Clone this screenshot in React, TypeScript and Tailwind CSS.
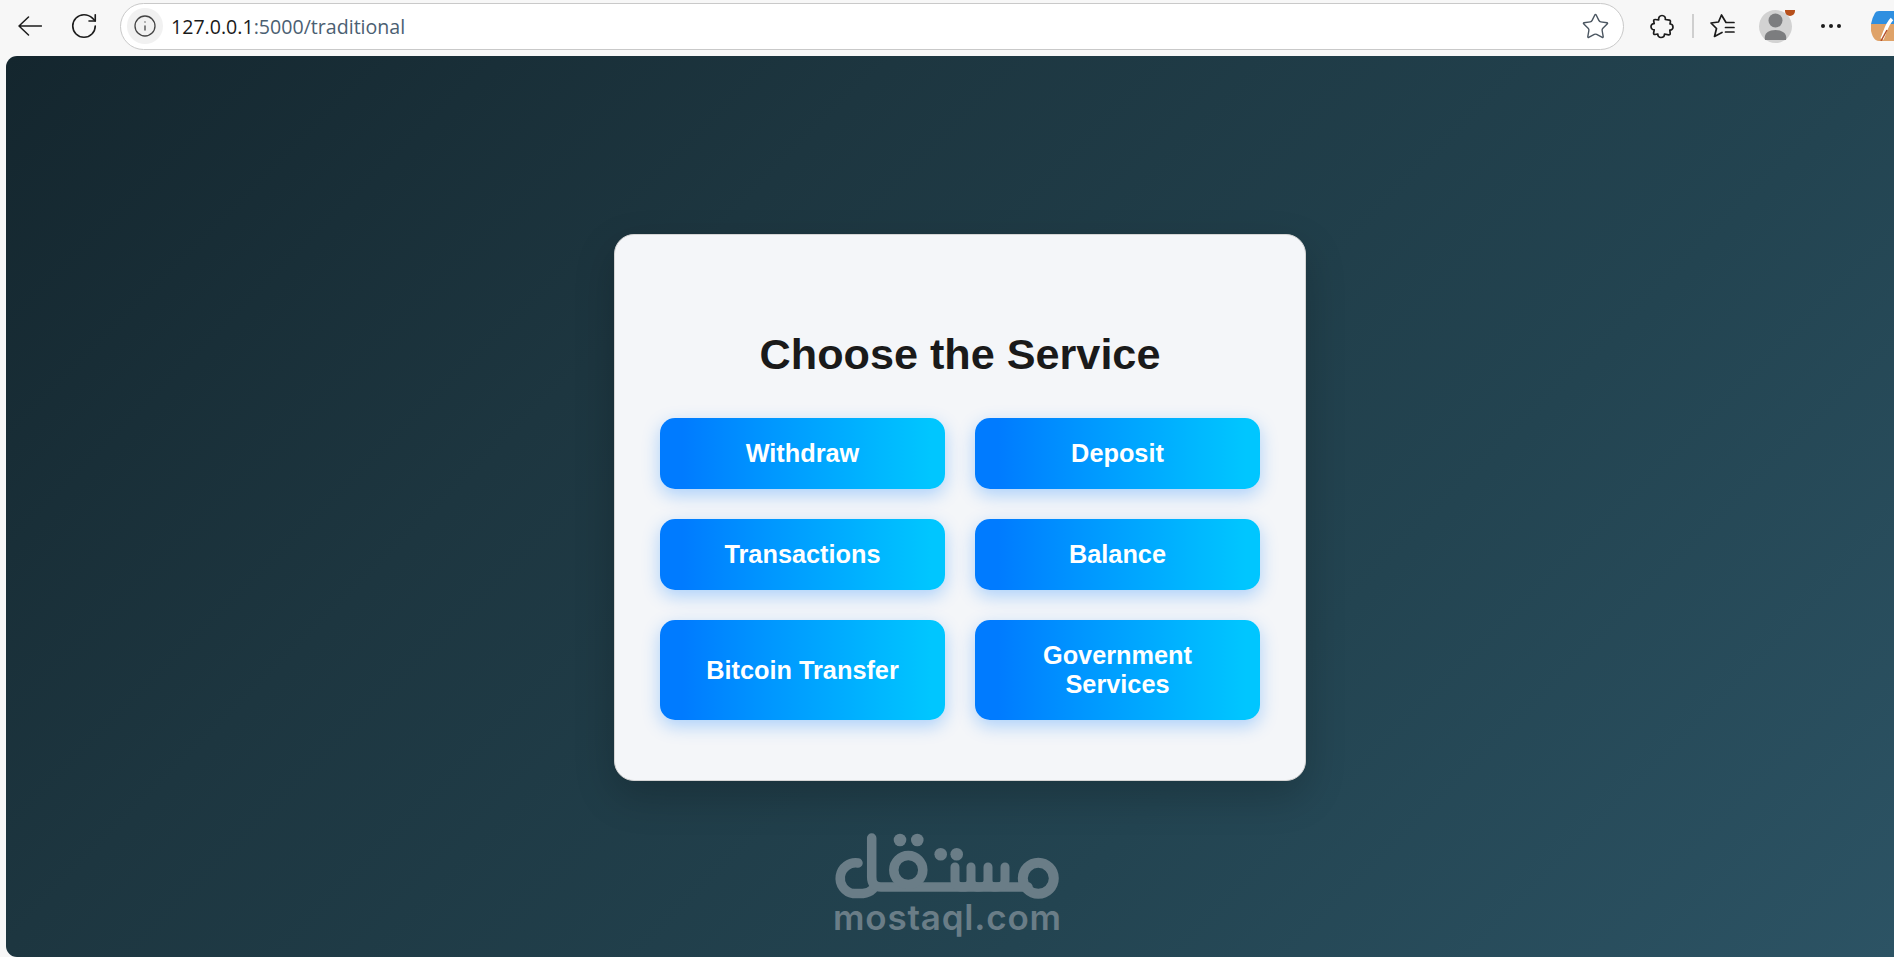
import { RotateCw, Info, Star } from "lucide-react";

function Btn({ label }: { label: string }) {
  return (
    <button className="flex items-center justify-center rounded-[15px] bg-gradient-to-r from-[#007bff] from-8% to-[#00c6ff] to-95% px-[32px] text-center text-[25.3px] leading-[29px] font-bold text-white shadow-[0_6px_18px_rgba(0,123,255,0.3)]">
      {label}
    </button>
  );
}

function Logo() {
  const c = "#6a7d87";
  return (
    <svg width="228" height="70" viewBox="0 0 228 70" fill="none" stroke={c} strokeWidth="9.5" strokeLinecap="round" strokeLinejoin="round">
      <path d="M25 33 A15.300 15.300 0 0 0 20.300 63.600 H30 Q36 63 40 59" />
      <path d="M38.700 8 V47 Q38.700 57 48 57 H195" />
      <circle cx="75.300" cy="40" r="14.500" />
      <path strokeWidth="9" d="M122 37 V50 Q122 57 130 57 Q138 57 138 50 V37 M138 50 Q138 57 146 57 Q155 57 155 50 V37 M155 50 Q155 57 163 57 Q172 57 172 50 V37" />
      <circle cx="205.300" cy="48.300" r="15.500" strokeWidth="10" />
      <g fill={c} stroke="none">
        <circle cx="67" cy="10" r="6.300" />
        <circle cx="84.300" cy="10" r="6.300" />
        <circle cx="107.700" cy="24.300" r="6.300" />
        <circle cx="123.700" cy="24.300" r="6.300" />
      </g>
    </svg>
  );
}

export default function App() {
  return (
    <div className="flex h-[957px] w-[1894px] flex-col overflow-hidden bg-[#f7f7f7] font-['Liberation_Sans',sans-serif]">
      <header className="flex h-[56px] shrink-0 items-center pb-[4px]">
        <div className="flex w-[120px] shrink-0 items-center pl-[18px]">
          <svg width="24" height="20" viewBox="0 0 24 20" fill="none" stroke="#1c1c1c" strokeWidth="1.5" strokeLinecap="round" strokeLinejoin="round">
            <path d="M10.500 1 L1 10 L10.500 19 M1 10 H23.500" />
          </svg>
          <RotateCw size={30} strokeWidth={1.3} className="ml-[27px] text-[#1c1c1c]" />
        </div>
        <div className="flex h-[47px] w-[1504px] shrink-0 items-center rounded-full border border-[#c9c9c9] bg-white pl-[6px] pr-[13px]">
          <span className="flex h-[36px] w-[36px] items-center justify-center rounded-full bg-[#f1f1f1]">
            <Info size={24} strokeWidth={1.3} className="text-[#444]" />
          </span>
          <span className="ml-[8px] pt-[1px] font-['Open_Sans',sans-serif] text-[19.6px] text-[#1a1a1a]">
            127.0.0.1<span className="text-[#4b6072]">:5000/traditional</span>
          </span>
          <Star size={29} strokeWidth={1.15} className="ml-auto text-[#4a5560]" />
        </div>
        <div className="flex flex-1 items-center overflow-hidden">
          <svg width="24" height="25" viewBox="0 0 24 25" fill="none" stroke="#1c1c1c" strokeWidth="1.7" strokeLinejoin="round" className="ml-[26px] shrink-0">
            <path d="M12 1.500 C14.500 1.500 15.800 3.500 15.300 5.500 L19.500 6.200 C20.500 6.400 20.500 7.500 20.300 8.500 L20 10 C22 10 23 11.500 23 13.200 C23 15 21.500 16.300 19.800 16 L20.200 19.500 C20.300 20.500 19.500 21 18.500 20.800 L14.500 20 C14.500 22.200 13 23.500 11 23.500 C9 23.500 7.600 22 7.800 20 L5 20.500 C4 20.600 3.500 20 3.600 19 L4.200 15.800 C2.500 16 1 14.500 1 12.600 C1 10.800 2.400 9.400 4.200 9.600 L3.700 7 C3.600 6 4.200 5.400 5.200 5.500 L8.700 6 C8.200 3.600 9.800 1.500 12 1.500 Z" />
          </svg>
          <span className="ml-[18px] h-[24px] w-[2px] shrink-0 bg-[#cfcfcf]" />
          <svg width="25" height="24" viewBox="0 0 25 24" fill="none" stroke="#1c1c1c" strokeWidth="1.7" strokeLinecap="round" strokeLinejoin="round" className="ml-[16px] shrink-0">
            <path d="M24 8.500 H16 L11.500 1 L8.500 8 L1 9 L6.500 14.500 L4.500 22.500 L12 18.500" />
            <path d="M15.500 13.500 H24 M15.500 18 H24" />
          </svg>
          <span className="relative ml-[24px] flex h-[33px] w-[33px] shrink-0 items-center justify-center rounded-full bg-[#d2d2d2]">
            <svg width="23" height="27" viewBox="0 0 23 27" fill="#7c7d7f">
              <circle cx="11.500" cy="7.500" r="7" />
              <path d="M1 27c-1.500-6 3-10 10.500-10s12 4 10.500 10c-1 .6-20 .6-21 0z" />
            </svg>
            <span className="absolute right-[-3px] top-[-4px] h-[10px] w-[10px] rounded-full bg-[#b7501c]" />
          </span>
          <span className="ml-[29px] flex shrink-0 gap-[4px]">
            <span className="h-[4px] w-[4px] rounded-full bg-[#1c1c1c]" />
            <span className="h-[4px] w-[4px] rounded-full bg-[#1c1c1c]" />
            <span className="h-[4px] w-[4px] rounded-full bg-[#1c1c1c]" />
          </span>
          <svg width="24" height="30" viewBox="0 0 24 30" className="ml-[29px] shrink-0">
            <path d="M5 2 Q6 0 9 0 H24 V13 H1 Q2 7 5 2 Z" fill="#2f8fe0" />
            <path d="M1 13 H24 V30 H9 C4 30 2 24 1 20 Z" fill="#dfa268" />
            <path d="M12 28 C15 22 16 14 22 8" stroke="#fff" strokeWidth="3.500" fill="none" />
            <path d="M11 30 L17 19" stroke="#b5502a" strokeWidth="1.500" fill="none" />
          </svg>
        </div>
      </header>
      <main className="relative ml-[6px] flex flex-1 items-center justify-center overflow-hidden rounded-l-[11px] bg-[linear-gradient(135deg,#14262e_0%,#1d3640_32%,#234451_68%,#2c5364_100%)]">
        <section className="ml-[20px] mt-[2px] w-[692px] rounded-[20px] border border-[#d4d4d4] bg-[#f4f6f9] px-[45px] pb-[60px] pt-[94px] shadow-[0_15px_40px_rgba(0,0,0,0.2)]">
          <h1 className="mb-[39px] text-center text-[43.2px] leading-[50px] font-bold text-[#1a1a1a]">Choose the Service</h1>
          <div className="grid grid-cols-2 grid-rows-[71px_71px_100px] gap-[30px]">
            <Btn label="Withdraw" />
            <Btn label="Deposit" />
            <Btn label="Transactions" />
            <Btn label="Balance" />
            <Btn label="Bitcoin Transfer" />
            <Btn label="Government Services" />
          </div>
        </section>
        <div className="absolute left-[827px] top-[774px] flex flex-col items-center">
          <Logo />
          <span className="mt-[-2px] font-['Inter',sans-serif] text-[35px] leading-[38px] font-semibold tracking-[0.8px] text-[#6a7d87]">mostaql.com</span>
        </div>
      </main>
    </div>
  );
}
